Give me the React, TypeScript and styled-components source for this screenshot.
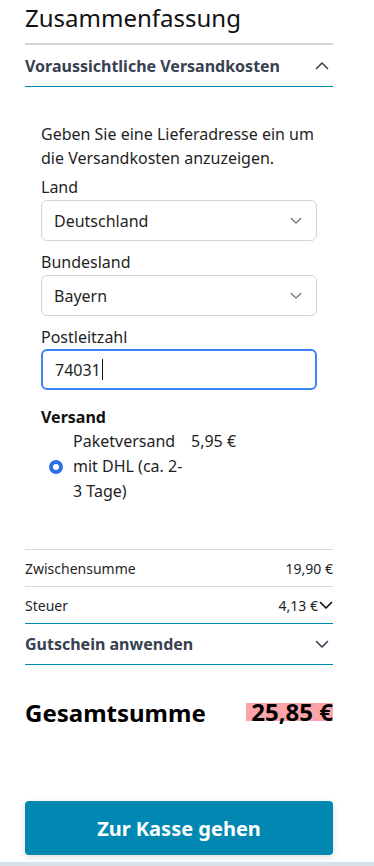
import React from "react";
import styled, { createGlobalStyle } from "styled-components";

const Global = createGlobalStyle`
  html, body { margin: 0; padding: 0; background: #fff; }
  body { font-family: "Noto Sans", "Open Sans", sans-serif; color: #111; }
  * { box-sizing: border-box; }
`;

const Page = styled.div`
  width: 374px;
  min-height: 866px;
  display: flex;
  flex-direction: column;
`;

const Summary = styled.div`
  margin-left: 25px;
  width: 308px;
  display: flex;
  flex-direction: column;
`;

const Title = styled.h1`
  margin: 0;
  font-size: 24px;
  font-weight: 400;
  line-height: 36px;
  color: #111;
  padding-bottom: 7px;
  border-bottom: 2px solid #d1d5db;
`;

const AccordionHeader = styled.div<{ $height: number }>`
  display: flex;
  align-items: center;
  justify-content: space-between;
  height: ${(p) => p.$height}px;
  border-bottom: 1px solid #0088b3;
  font-size: 16px;
  font-weight: 700;
  color: #374151;
  padding-right: 4px;
`;

const Body = styled.div`
  padding: 35px 16px 0 16px;
  display: flex;
  flex-direction: column;
`;

const Intro = styled.p`
  margin: 0;
  font-size: 16px;
  line-height: 24px;
  color: #1f1f1f;
`;

const Label = styled.label<{ $top: number }>`
  display: block;
  margin-top: ${(p) => p.$top}px;
  font-size: 16px;
  line-height: 24px;
  color: #1f1f1f;
`;

const SelectBox = styled.div`
  display: flex;
  align-items: center;
  justify-content: space-between;
  height: 41px;
  margin-top: 1px;
  padding: 0 14px 0 12px;
  border: 1px solid #d4d4d8;
  border-radius: 6px;
  font-size: 16px;
  color: #1f1f1f;
`;

const InputBox = styled.div`
  display: flex;
  align-items: center;
  height: 41px;
  padding: 0 12px;
  border: 2px solid #3b82f6;
  border-radius: 6px;
  font-size: 16px;
  color: #1f1f1f;
`;

const Caret = styled.span`
  display: inline-block;
  width: 1px;
  height: 21px;
  background: #111;
  margin-left: 1px;
`;

const SectionTitle = styled.div`
  margin-top: 15px;
  font-size: 16px;
  font-weight: 700;
  line-height: 24px;
  color: #111;
`;

const Option = styled.div`
  display: grid;
  grid-template-columns: 14px 122px auto;
  align-items: center;
  padding-left: 8px;
  margin-bottom: 45px;
  font-size: 16px;
  line-height: 25px;
  color: #1f1f1f;
`;

const Radio = styled.span`
  width: 14px;
  height: 14px;
  border-radius: 50%;
  border: 4px solid #2f6fe8;
  background: #fff;
`;

const OptionLabel = styled.span`
  margin-left: 10px;
`;

const Price = styled.span`
  align-self: start;
  margin-left: 6px;
  white-space: nowrap;
`;

const Row = styled.div`
  display: flex;
  align-items: center;
  justify-content: space-between;
  height: 37px;
  border-top: 1px solid #d9d9de;
  font-size: 14px;
  color: #1f1f1f;
`;

const RowValue = styled.span`
  display: flex;
  align-items: center;
  gap: 1px;
`;

const Divider = styled.div`
  border-top: 1px solid #0088b3;
`;

const Total = styled.div`
  display: flex;
  align-items: center;
  justify-content: space-between;
  margin-top: 32px;
  height: 30px;
  font-size: 24px;
  font-weight: 700;
  color: #000;
`;

const TotalValue = styled.span`
  display: inline-block;
  background: #fca5a8;
  height: 18px;
  line-height: 18px;
  padding-left: 5px;
`;

const Button = styled.button`
  margin-top: 74px;
  height: 54px;
  width: 308px;
  border: none;
  border-radius: 4px;
  background: #0088b3;
  color: #fff;
  font-family: inherit;
  font-size: 20px;
  font-weight: 700;
  box-shadow: 0 2px 6px rgba(0, 0, 0, 0.15);
`;

const Footer = styled.div`
  margin-top: 7px;
  flex: 1;
  min-height: 4px;
  background: #d8e1e9;
`;

const Chevron = ({ up, color, size = 14, stroke = 1.6 }: { up?: boolean; color: string; size?: number; stroke?: number }) => (
  <svg width={size} height={size / 2 + 2} viewBox="0 0 14 9" fill="none">
    <path
      d={up ? "M1.5 7.5 L7 2 L12.5 7.5" : "M1.5 1.5 L7 7 L12.5 1.5"}
      stroke={color}
      strokeWidth={stroke}
      strokeLinecap="round"
      strokeLinejoin="round"
    />
  </svg>
);

export default function App() {
  return (
    <Page>
      <Global />
      <Summary>
        <Title>Zusammenfassung</Title>
        <AccordionHeader $height={42}>
          <span>Voraussichtliche Versandkosten</span>
          <Chevron up color="#374151" />
        </AccordionHeader>
        <Body>
          <Intro>Geben Sie eine Lieferadresse ein um die Versandkosten anzuzeigen.</Intro>
          <Label $top={5}>Land</Label>
          <SelectBox>
            <span>Deutschland</span>
            <Chevron color="#6b7280" size={12} stroke={1.5} />
          </SelectBox>
          <Label $top={9}>Bundesland</Label>
          <SelectBox>
            <span>Bayern</span>
            <Chevron color="#6b7280" size={12} stroke={1.5} />
          </SelectBox>
          <Label $top={9}>Postleitzahl</Label>
          <InputBox>
            74031
            <Caret />
          </InputBox>
          <SectionTitle>Versand</SectionTitle>
          <Option>
            <Radio />
            <OptionLabel>
              Paketversand mit DHL (ca. 2-<wbr />3 Tage)
            </OptionLabel>
            <Price>5,95 €</Price>
          </Option>
        </Body>
        <Row>
          <span>Zwischensumme</span>
          <span>19,90 €</span>
        </Row>
        <Row>
          <span>Steuer</span>
          <RowValue>
            4,13 €
            <Chevron color="#111" size={14} stroke={1.7} />
          </RowValue>
        </Row>
        <Divider />
        <AccordionHeader $height={41}>
          <span>Gutschein anwenden</span>
          <Chevron color="#374151" />
        </AccordionHeader>
        <Total>
          <span>Gesamtsumme</span>
          <TotalValue>25,85 €</TotalValue>
        </Total>
        <Button>Zur Kasse gehen</Button>
      </Summary>
      <Footer />
    </Page>
  );
}
